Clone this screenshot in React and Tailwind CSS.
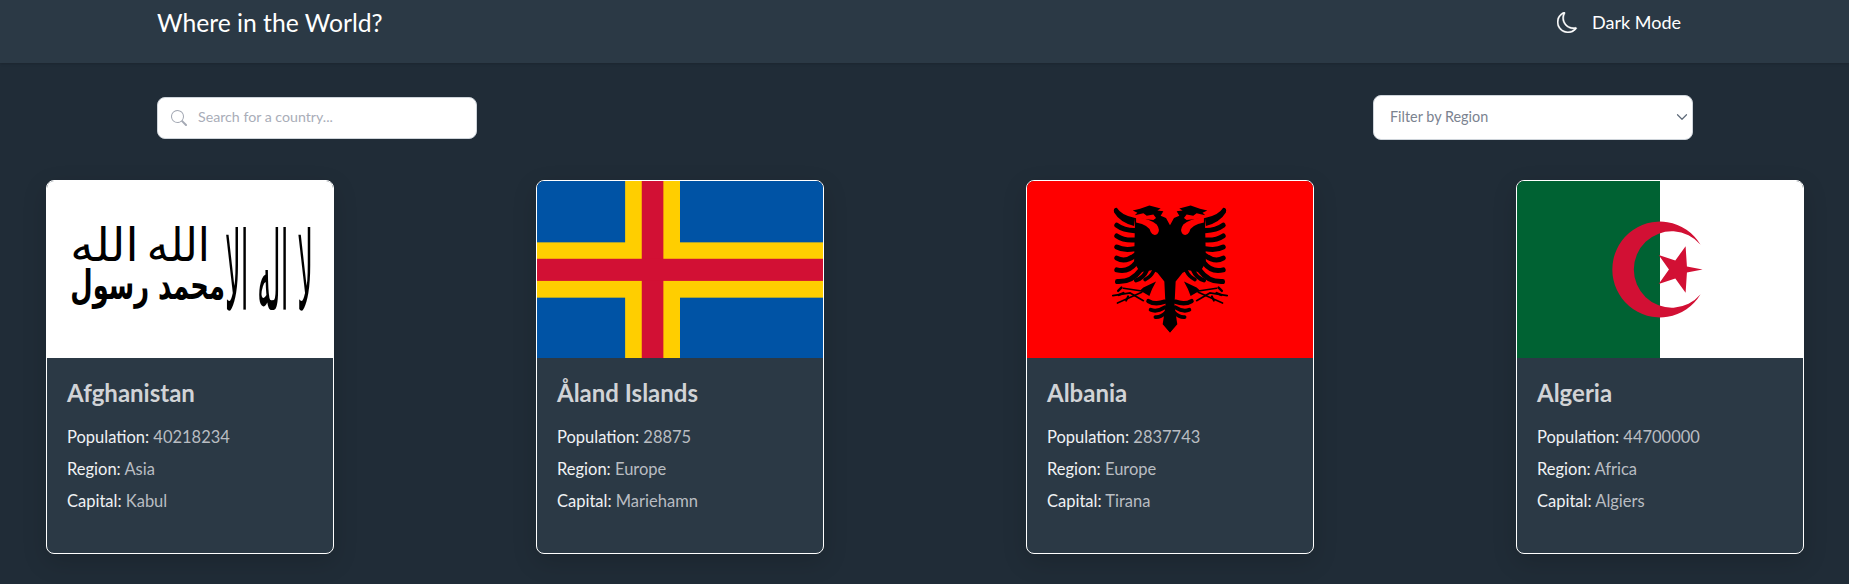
import React from 'react';
import { BsMoon, BsSearch } from 'react-icons/bs';

const countries = [
  { name: 'Afghanistan', population: 40218234, region: 'Asia', capital: 'Kabul', Flag: AfghanFlag },
  { name: 'Åland Islands', population: 28875, region: 'Europe', capital: 'Mariehamn', Flag: AlandFlag },
  { name: 'Albania', population: 2837743, region: 'Europe', capital: 'Tirana', Flag: AlbaniaFlag },
  { name: 'Algeria', population: 44700000, region: 'Africa', capital: 'Algiers', Flag: AlgeriaFlag },
];

function AfghanFlag() {
  return (
    <svg viewBox="50 33 860 527" className="block w-full h-full" preserveAspectRatio="none">
      <rect x="50" y="33" width="860" height="527" fill="#fff" />
      <g fill="#000" fontFamily='"DejaVu Sans", sans-serif' direction="rtl">
        <text transform="translate(850 418) scale(1 3.6)" fontSize="90" textLength="265" lengthAdjust="spacingAndGlyphs">لا اله الا</text>
        <text transform="translate(540 272) scale(1 1.7)" fontSize="80" textLength="190" lengthAdjust="spacingAndGlyphs">الله</text>
        <text transform="translate(325 272) scale(1 1.7)" fontSize="80" textLength="205" lengthAdjust="spacingAndGlyphs">الله</text>
        <text transform="translate(585 385) scale(1 1.5)" fontSize="80" fontWeight="700" textLength="465" lengthAdjust="spacingAndGlyphs">محمد رسول</text>
      </g>
    </svg>
  );
}

function AlandFlag() {
  return (
    <svg viewBox="20 18 860 528" className="block w-full h-full" preserveAspectRatio="none">
      <rect x="20" y="18" width="860" height="528" fill="#0053a5" />
      <rect x="285" y="18" width="165" height="528" fill="#ffce00" />
      <rect x="20" y="201" width="860" height="165" fill="#ffce00" />
      <rect x="335" y="18" width="65" height="528" fill="#d21034" />
      <rect x="20" y="250" width="860" height="66" fill="#d21034" />
    </svg>
  );
}

// right half of the eagle, mirrored for the left half
function EagleHalf() {
  return (
    <g>
      <path d="M450 150 L462 128 L478 122 L470 108 L488 106 L478 100 L512 91 L540 101 L562 106 L548 113 L556 120 L530 114 L520 122 L500 118 L492 128 L500 134 L555 128 L558 260 L540 290 L505 284 L488 292 L467 318 L463 400 L448 400 L448 150 Z" fill="#000" />
      <path d="M552 126 Q510 130 490 148 Q478 165 488 176 Q500 184 508 170 Q512 150 552 142 Z" fill="#ff0000" />
      <path d="M555 128 Q595 122 610 98 Q622 98 618 112 Q600 142 558 152 Z" fill="#000" />
      <g fill="none" stroke="#000" strokeLinecap="round" strokeWidth="15">
        <path d="M556 166 Q590 165 610 150" />
        <path d="M556 194 Q590 196 610 182" />
        <path d="M556 220 Q590 226 610 215" />
        <path d="M556 240 Q585 262 610 248" />
        <path d="M552 262 Q575 292 610 283" />
        <path d="M540 285 Q565 320 608 318" strokeWidth="15" />
        <path d="M520 285 Q530 308 552 314" strokeWidth="13" />
        <path d="M500 288 Q508 304 525 312" strokeWidth="11" />
        <path d="M466 378 Q495 388 515 376" strokeWidth="13" />
        <path d="M466 395 Q490 410 508 402" strokeWidth="12" />
        <path d="M462 410 Q480 426 494 424" strokeWidth="11" />
      </g>
      <path d="M492 318 L530 336 L540 345 L512 361 Q505 340 492 318 Z" fill="#000" />
      <path d="M450 470 L430 445 L440 400 L465 400 L472 445 Z" fill="#000" />
      <g fill="none" stroke="#000" strokeWidth="5" strokeLinecap="round">
        <path d="M530 347 L590 338" />
        <path d="M530 375 L570 352 L622 360" />
        <path d="M535 350 L608 382" />
        <path d="M596 336 L606 346" strokeWidth="7" />
        <path d="M576 362 L582 375" strokeWidth="6" />
        <path d="M590 352 L604 358" strokeWidth="7" />
      </g>
    </g>
  );
}

function AlbaniaFlag() {
  return (
    <svg viewBox="20 18 860 528" className="block w-full h-full" preserveAspectRatio="none">
      <rect x="20" y="18" width="860" height="528" fill="#ff0000" />
      <EagleHalf />
      <g transform="translate(900 0) scale(-1 1)">
        <EagleHalf />
      </g>
    </svg>
  );
}

function AlgeriaFlag() {
  return (
    <svg viewBox="20 18 860 528" className="block w-full h-full" preserveAspectRatio="none">
      <rect x="20" y="18" width="430" height="528" fill="#006233" />
      <rect x="450" y="18" width="430" height="528" fill="#fff" />
      <path d="M572 208 A143 143 0 1 0 572 356 A114 114 0 1 1 572 208 Z" fill="#d21034" />
      <polygon points="578,282 531,291 527,351 496,309 446,325 477,282 446,239 496,255 527,213 531,273" fill="#d21034" />
    </svg>
  );
}

function CountryCard({ country }) {
  const { name, population, region, capital, Flag } = country;
  return (
    <div className="w-[288px] h-[374px] flex flex-col rounded-lg border border-white bg-[#2b3945] overflow-hidden shadow-[0_8px_24px_rgba(0,0,0,0.15)]">
      <div className="h-[177px] shrink-0">
        <Flag />
      </div>
      <div className="pl-[20px] pt-[18px]">
        <h2 className="text-[24px] leading-[34px] font-bold text-[#d1d3d6] mb-[11px]">{name}</h2>
        <p className="text-[16.5px] leading-[32px] text-[#f0f2f4]">Population: <span className="text-[#b9bdc2]">{population}</span></p>
        <p className="text-[16.5px] leading-[32px] text-[#f0f2f4]">Region: <span className="text-[#b9bdc2]">{region}</span></p>
        <p className="text-[16.5px] leading-[32px] text-[#f0f2f4]">Capital: <span className="text-[#b9bdc2]">{capital}</span></p>
      </div>
    </div>
  );
}

export default function App() {
  return (
    <div className="h-[584px] overflow-hidden bg-[#202c37] text-white" style={{ fontFamily: 'Lato, "Open Sans", sans-serif' }}>
      {/* Header */}
      <header className="h-[63px] bg-[#2b3945] flex justify-between items-start pl-[157px] pr-[168px] shadow-sm">
        <h1 className="text-[24.7px] leading-[46px] font-normal">Where in the World?</h1>
        <div className="flex items-center gap-[14px] h-[45px] text-[18px]">
          <BsMoon className="w-[21px] h-[21px] stroke-[0.3]" />
          <span>Dark Mode</span>
        </div>
      </header>

      {/* Search + filter */}
      <div className="flex justify-between items-center pl-[157px] pr-[156px] mt-[32px]">
        <div className="w-[320px] h-[42px] flex items-center bg-white rounded-lg border border-[#ced4da] pl-[13px]">
          <BsSearch className="w-[16px] h-[16px] text-[#a4a9b4] shrink-0" />
          <input placeholder="Search for a country..." className="ml-[11px] flex-1 min-w-0 text-[14.2px] pb-[1px] outline-none bg-transparent text-black placeholder:text-[#a9adb8]" />
        </div>
        <div className="relative w-[320px] h-[45px]">
          <select className="w-full h-full appearance-none bg-white rounded-lg border border-[#ced4da] pl-[16px] pb-[1px] text-[14.4px] text-[#7b8390] outline-none">
            <option>Filter by Region</option>
          </select>
          <svg viewBox="0 0 16 16" className="absolute right-[5px] top-[16px] w-[12px] h-[12px] pointer-events-none" fill="none" stroke="#5f6b7a" strokeWidth="1.6" strokeLinecap="round" strokeLinejoin="round">
            <path d="m2 5 6 6 6-6" />
          </svg>
        </div>
      </div>

      {/* Cards */}
      <div className="flex justify-between pl-[46px] pr-[45px] mt-[40px]">
        {countries.map((c) => (
          <CountryCard key={c.name} country={c} />
        ))}
      </div>
    </div>
  );
}
